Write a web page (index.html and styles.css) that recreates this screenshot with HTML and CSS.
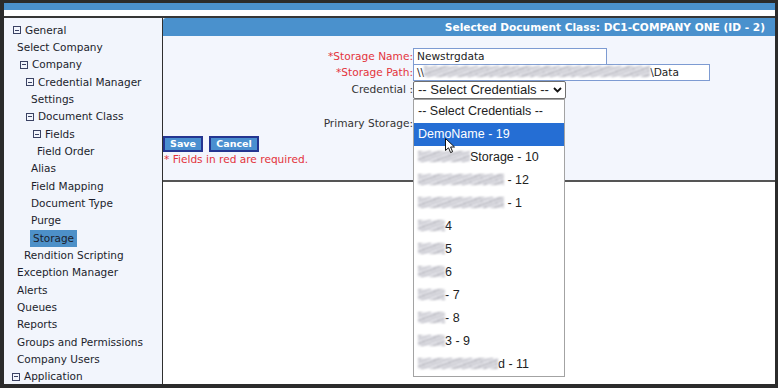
FILE: index.html
```html
<!DOCTYPE html>
<html>
<head>
<meta charset="utf-8">
<link rel="stylesheet" href="styles.css">
</head>
<body>
<div class="window">
  <div class="topband"></div>
  <div class="strip"></div>
  <div class="sep"></div>
  <div class="main">
    <nav class="sidebar">
      <div class="item p9"><span class="tog"></span>General</div>
      <div class="item p13">Select Company</div>
      <div class="item p16"><span class="tog"></span>Company</div>
      <div class="item p22"><span class="tog"></span>Credential Manager</div>
      <div class="item p27">Settings</div>
      <div class="item p22"><span class="tog"></span>Document Class</div>
      <div class="item p29"><span class="tog"></span>Fields</div>
      <div class="item p33">Field Order</div>
      <div class="item p27">Alias</div>
      <div class="item p27">Field Mapping</div>
      <div class="item p27">Document Type</div>
      <div class="item p27">Purge</div>
      <div class="item p26"><span class="sel">Storage</span></div>
      <div class="item p20">Rendition Scripting</div>
      <div class="item p13">Exception Manager</div>
      <div class="item p13">Alerts</div>
      <div class="item p13">Queues</div>
      <div class="item p13">Reports</div>
      <div class="item p13">Groups and Permissions</div>
      <div class="item p13">Company Users</div>
      <div class="item p8"><span class="tog"></span>Application</div>
    </nav>
    <section class="content">
      <div class="hdr">Selected Document Class: DC1-COMPANY ONE (ID - 2)</div>
      <div class="form">
        <div class="grid">
          <div class="lbl req">*Storage Name:</div>
          <div class="val"><div class="inp w-name">Newstrgdata</div></div>
          <div class="lbl req">*Storage Path:</div>
          <div class="val"><div class="inp w-path">\\<span class="blur bp"></span>\Data</div></div>
          <div class="lbl">Credential :</div>
          <div class="val">
            <div class="selwrap">
              <div class="select">-- Select Credentials --
                <svg class="chev" width="9" height="6" viewBox="0 0 9 6"><path d="M1 1 L4.5 4.5 L8 1" fill="none" stroke="#111" stroke-width="1.8"/></svg>
              </div>
              <div class="dropdown">
                <div class="opt">-- Select Credentials --</div>
                <div class="opt hl">DemoName - 19</div>
                <div class="opt"><span class="blur b52"></span>Storage - 10</div>
                <div class="opt"><span class="blur b86"></span> - 12</div>
                <div class="opt"><span class="blur b86"></span> - 1</div>
                <div class="opt"><span class="blur b27"></span>4</div>
                <div class="opt"><span class="blur b27"></span>5</div>
                <div class="opt"><span class="blur b27"></span>6</div>
                <div class="opt"><span class="blur b27"></span>- 7</div>
                <div class="opt"><span class="blur b27"></span>- 8</div>
                <div class="opt"><span class="blur b27"></span>3 - 9</div>
                <div class="opt"><span class="blur b80"></span>d - 11</div>
                <svg class="cursor" width="11" height="16" viewBox="0 0 11 16"><path d="M0.5 0.5 L0.5 12.5 L3.5 9.8 L5.6 14.6 L7.6 13.7 L5.6 9 L9.5 9 Z" fill="#fff" stroke="#111" stroke-width="1"/></svg>
              </div>
            </div>
          </div>
          <div class="lbl lbl-ps">Primary Storage:</div>
          <div class="val"></div>
        </div>
        <div class="btns">
          <button class="btn b-save">Save</button>
          <button class="btn b-cancel">Cancel</button>
        </div>
        <div class="note">* Fields in red are required.</div>
      </div>
    </section>
  </div>
</div>
</body>
</html>
```
FILE: styles.css
```css
* { box-sizing: border-box; }
html, body { margin: 0; padding: 0; }
body {
  background: #2b2b2b;
  width: 778px;
  height: 388px;
  overflow: hidden;
  font-family: "DejaVu Sans", Verdana, sans-serif;
}
.window {
  margin: 3px 3px 0 4px;
  width: 771px;
  height: 381px;
  display: flex;
  flex-direction: column;
}
.topband { height: 7px; background: #4a91cd; }
.strip { height: 6px; background: #ffffff; }
.sep { height: 2px; background: #363636; }
.main { flex: 1; display: flex; min-height: 0; }

.sidebar {
  width: 159px;
  background: #f2f5fc;
  border-right: 1px solid #2f2f2f;
  padding-top: 3.5px;
  font-size: 10.5px;
  color: #1c1e2c;
}
.item { height: 17.35px; line-height: 17.35px; white-space: nowrap; }
.p8 { padding-left: 8px; }
.p9 { padding-left: 9px; }
.p13 { padding-left: 13px; }
.p16 { padding-left: 16px; }
.p20 { padding-left: 20px; }
.p22 { padding-left: 22px; }
.p26 { padding-left: 26px; }
.p27 { padding-left: 27px; }
.p29 { padding-left: 29px; }
.p33 { padding-left: 33px; }
.tog {
  display: inline-block;
  width: 8px;
  height: 8px;
  border: 1px solid #3b4263;
  margin-right: 4px;
  vertical-align: -0.5px;
  background: linear-gradient(#3b4263, #3b4263) center / 4px 1px no-repeat;
}
.sel {
  display: inline-block;
  background: #4d90c8;
  padding: 0 3px;
  height: 17px;
  line-height: 17px;
}

.content { flex: 1; background: #fff; display: flex; flex-direction: column; }
.hdr {
  height: 18px;
  line-height: 18px;
  background: #4a91cd;
  color: #fff;
  font-weight: bold;
  font-size: 10.6px;
  text-align: right;
  padding-right: 10px;
  border-top-left-radius: 3px;
}
.form {
  height: 146px;
  background: #f3f6fd;
  border-bottom: 2px solid #555;
  padding-top: 12px;
  font-size: 10.6px;
  color: #333;
}
.grid {
  display: grid;
  grid-template-columns: 250px 1fr;
  grid-template-rows: 16px 17px 18px 36px;
}
.lbl { text-align: right; line-height: 16px; white-space: nowrap; }
.req { color: #e3343c; }
.lbl-ps { padding-top: 18px; line-height: 13px; }
.val { position: relative; }
.inp {
  height: 17px;
  border: 1px solid #7d9bd2;
  background: #fff;
  color: #222;
  line-height: 15px;
  padding-left: 3px;
  white-space: nowrap;
}
.w-name { width: 194px; }
.w-path { width: 297px; }
.blur {
  display: inline-block;
  height: 11px;
  vertical-align: -1px;
  background: repeating-linear-gradient(160deg, #b9b9c1 0 2px, #e6e6eb 2px 4px, #a9a9b3 4px 5px, #efeff3 5px 7px);
  filter: blur(1px);
}
.bp { width: 226px; }
.b52 { width: 52px; }
.b86 { width: 86px; }
.b27 { width: 27px; }
.b80 { width: 80px; }

.selwrap { position: relative; width: 153px; }
.select {
  height: 18px;
  border: 1px solid #6f6f6f;
  border-radius: 2px;
  background: #fff;
  font-family: "Liberation Sans", Arial, sans-serif;
  font-size: 13.1px;
  line-height: 16px;
  color: #222;
  padding-left: 4px;
  white-space: nowrap;
  position: relative;
}
.chev { position: absolute; right: 3px; top: 5px; }
.dropdown {
  position: absolute;
  left: 0;
  top: 18px;
  width: 152px;
  height: 278px;
  border: 1px solid #a3a3a3;
  background: #fff;
  font-family: "Liberation Sans", Arial, sans-serif;
  font-size: 12.5px;
  color: #222;
  z-index: 5;
}
.opt { height: 23px; line-height: 23px; padding-left: 4px; white-space: nowrap; }
.opt.hl { background: #256ed4; color: #fff; }
.cursor { position: absolute; left: 31px; top: 38px; }

.btns { display: flex; gap: 6px; margin-top: 1px; }
.btn {
  height: 16px;
  border: 2px solid #243591;
  background: #4a8fd0;
  color: #fff;
  font-family: "DejaVu Sans", Verdana, sans-serif;
  font-weight: bold;
  font-size: 9.5px;
  padding: 0;
  line-height: 12px;
  margin: 0;
}
.b-save { width: 40px; }
.b-cancel { width: 50px; }
.note { color: #e3343c; line-height: 13px; padding-left: 1px; margin-top: 1px; }
```
